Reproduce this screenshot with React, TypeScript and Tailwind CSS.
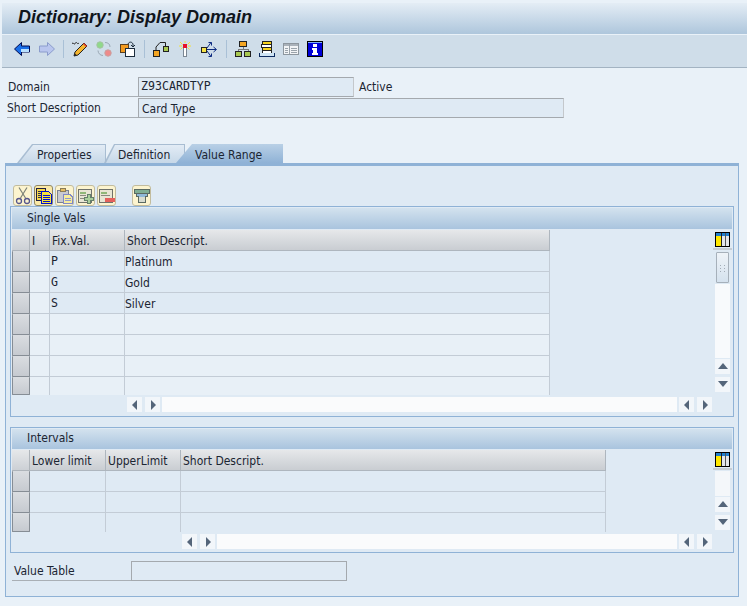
import React from 'react';

type IconProps = { children: React.ReactNode };

function Ico({ children }: IconProps) {
  return (
    <svg viewBox="0 0 16 16" className="h-4 w-4 shrink-0" shapeRendering="crispEdges">
      {children}
    </svg>
  );
}

const ArrowLeft = () => (
  <Ico>
    <polygon points="0.5,8 7.5,1.5 7.5,5 15.5,5 15.5,11 7.5,11 7.5,14.5" fill="#1a6fe8" stroke="#000a50" shapeRendering="auto" />
    <rect x="7" y="8" width="8" height="2.5" fill="#b8e0ff" />
  </Ico>
);

const ArrowRight = () => (
  <Ico>
    <polygon points="15.5,8 8.5,1.5 8.5,5 0.5,5 0.5,11 8.5,11 8.5,14.5" fill="#b9c6ee" stroke="#8b9ccc" shapeRendering="auto" />
  </Ico>
);

const Pencil = () => (
  <Ico>
    <path d="M0 3 C1 0 2 5 3.5 2 C4.5 0 5 4 7 2" fill="none" stroke="#222" strokeWidth="1" shapeRendering="auto" />
    <polygon points="2,15 3,11 12,2 15,5 6,14" fill="#f5b52e" stroke="#222" shapeRendering="auto" />
    <polygon points="11,3 14,6 15,5 12,2" fill="#e04030" shapeRendering="auto" />
    <polygon points="2,15 3,12.5 4.5,14" fill="#222" shapeRendering="auto" />
  </Ico>
);

const Circles = () => (
  <Ico>
    <circle cx="4" cy="4" r="3.2" fill="#8fd98a" stroke="#a4c4a0" shapeRendering="auto" />
    <circle cx="12" cy="12" r="3.2" fill="#ee8a8a" stroke="#c8a0a0" shapeRendering="auto" />
    <path d="M9 1.5 C12 1.5 14 3 14 6" fill="none" stroke="#9aa8b4" shapeRendering="auto" />
    <path d="M2 9.5 C2 12 4 14.5 7 14.5" fill="none" stroke="#9aa8b4" shapeRendering="auto" />
  </Ico>
);

const CopyObj = () => (
  <Ico>
    <rect x="0.5" y="3.5" width="8" height="8" fill="#f29a1f" stroke="#5a4020" />
    <rect x="5.5" y="7.5" width="9" height="8" fill="#fff" stroke="#1c2c3c" />
    <path d="M8 3 C9 0.5 12 0.5 13 3 L13 6" fill="none" stroke="#1c2c3c" shapeRendering="auto" />
    <path d="M11 4 L13 6 L15 4" fill="none" stroke="#1c2c3c" shapeRendering="auto" />
  </Ico>
);

const NodeLink = () => (
  <Ico>
    <rect x="0.5" y="9.5" width="6" height="6" fill="#f5a623" stroke="#222" />
    <rect x="10.5" y="5.5" width="5" height="5" fill="#a8c850" stroke="#222" />
    <path d="M3 9 L3 6 L7 1.5 L12.5 1.5 L12.5 5" fill="none" stroke="#222" shapeRendering="auto" />
  </Ico>
);

const Wand = () => (
  <Ico>
    <rect x="6.5" y="6.5" width="3" height="9" fill="#fff" stroke="#7c8894" />
    <rect x="6" y="3" width="4" height="4" fill="#e8102a" />
    <path d="M8 0V2M3 1L5.5 3.5M13 1L10.5 3.5M2 5H5M11 5H14M3.5 8.5L5.5 6.5M12.5 8.5L10.5 6.5" stroke="#f4e23c" fill="none" shapeRendering="auto" />
  </Ico>
);

const WhereUsed = () => (
  <Ico>
    <rect x="0.5" y="6" width="5" height="5" fill="#f6e34a" stroke="#222" />
    <path d="M6 8.5H15M12.5 6L15.5 8.5L12.5 11M6 7L10 1.5M7.5 1.5H10.5V4.5M6 10L10 15.5M7.5 15.5H10.5V12.5" fill="none" stroke="#0c2a80" shapeRendering="auto" />
  </Ico>
);

const Hierarchy = () => (
  <Ico>
    <rect x="4.5" y="0.5" width="7" height="5" fill="#f5a623" stroke="#222" />
    <path d="M8 6V8M3 10V8H13V10" fill="none" stroke="#7a7a7a" />
    <rect x="0.5" y="10.5" width="6" height="5" fill="#a8c850" stroke="#222" />
    <rect x="9.5" y="10.5" width="6" height="5" fill="#a8c850" stroke="#222" />
  </Ico>
);

const Stack = () => (
  <Ico>
    <rect x="3.5" y="0.5" width="9" height="3" fill="#f5d21f" stroke="#222" />
    <rect x="2.5" y="3.5" width="10" height="3" fill="#fff" stroke="#222" />
    <rect x="3.5" y="6.5" width="9" height="3" fill="#f5d21f" stroke="#222" />
    <rect x="3.5" y="9.5" width="9" height="3" fill="#fff" stroke="#222" />
    <path d="M0.5 12V15.5H15.5V12" fill="#cfe4f4" stroke="#0c2a60" />
  </Ico>
);

const ListGray = () => (
  <Ico>
    <rect x="0.5" y="2.5" width="15" height="11" fill="#f2f4f6" stroke="#8d969e" />
    <rect x="1" y="3" width="14" height="2" fill="#aab2ba" />
    <path d="M6.5 3V13M8 7H14M8 9H14M8 11H14M2 7H5M2 9H5M2 11H5" fill="none" stroke="#9aa3ab" />
  </Ico>
);

const Info = () => (
  <Ico>
    <rect x="0.5" y="0.5" width="15" height="15" fill="#0000d8" stroke="#000" />
    <rect x="1" y="1" width="14" height="1" fill="#7fb0f8" />
    <rect x="6" y="3" width="4" height="3" fill="#fff" />
    <path d="M5 7H10V12H11V14H5V12H6V9H5Z" fill="#fff" />
  </Ico>
);

const Scissors = () => (
  <svg viewBox="0 0 16 18" className="h-[18px] w-4">
    <path d="M4 0.5L10.5 11M12 0.5L5.5 11" stroke="#7c8278" strokeWidth="1.2" fill="none" />
    <circle cx="4" cy="14" r="2.5" fill="none" stroke="#55558c" strokeWidth="1.3" />
    <circle cx="12" cy="14" r="2.5" fill="none" stroke="#55558c" strokeWidth="1.3" />
  </svg>
);

const CopyDoc = () => (
  <svg viewBox="0 0 16 18" className="h-[18px] w-4" shapeRendering="crispEdges">
    <rect x="0.5" y="1.5" width="9" height="12" fill="#f6d84a" stroke="#202040" />
    <path d="M2 4.5H8M2 6.5H5M2 8.5H5M2 10.5H5" stroke="#303050" />
    <path d="M5.5 4.5H12.5L15.5 7.5V16.5H5.5Z" fill="#f8e23c" stroke="#0010d0" />
    <path d="M7 8.5H14M7 10.5H14M7 12.5H14M7 14.5H14" stroke="#0010d0" />
  </svg>
);

const PasteDoc = () => (
  <svg viewBox="0 0 16 18" className="h-[18px] w-4" shapeRendering="crispEdges">
    <rect x="0.5" y="3.5" width="11" height="12" fill="#c9cad0" stroke="#7b8190" />
    <rect x="3.5" y="1.5" width="5" height="3" fill="#e6be62" stroke="#8a7c58" />
    <path d="M6.5 7.5H13L15.5 10V16.5H6.5Z" fill="#f7ed9c" stroke="#8088c8" />
    <path d="M8 11.5H14M8 13.5H14" stroke="#8f98d0" />
  </svg>
);

const RowAdd = () => (
  <svg viewBox="0 0 16 18" className="h-[18px] w-4" shapeRendering="crispEdges">
    <rect x="0.5" y="2.5" width="13" height="13" fill="#e8e6d4" stroke="#6f726a" />
    <rect x="2" y="5" width="6" height="2" fill="#90b878" />
    <rect x="2" y="8" width="6" height="1" fill="#8a8a80" />
    <rect x="2" y="11" width="5" height="1" fill="#8a8a80" />
    <path d="M9.5 7.5H12.5V10.5H15.5V13.5H12.5V16.5H9.5V13.5H6.5V10.5H9.5Z" fill="#a9d09a" stroke="#64806a" />
  </svg>
);

const RowDel = () => (
  <svg viewBox="0 0 16 18" className="h-[18px] w-4" shapeRendering="crispEdges">
    <rect x="0.5" y="2.5" width="13" height="13" fill="#e8e6d4" stroke="#6f726a" />
    <rect x="2" y="5" width="6" height="2" fill="#90b878" />
    <rect x="2" y="8" width="9" height="1" fill="#8a8a80" />
    <rect x="6" y="11" width="10" height="4" fill="#e4615c" />
  </svg>
);

const Filter = () => (
  <svg viewBox="0 0 16 18" className="h-[18px] w-4" shapeRendering="crispEdges">
    <rect x="0.5" y="2.5" width="15" height="4" fill="#7fae94" stroke="#5a6a62" />
    <path d="M2.5 6.5H13.5V9.5H11.5V15.5H4.5V9.5H2.5Z" fill="#8fb8d8" stroke="#5a6a62" />
    <rect x="5" y="10" width="6" height="5" fill="#d8dcd0" />
  </svg>
);

const ConfigIcon = () => (
  <svg viewBox="0 0 15 15" className="h-[15px] w-[15px]" shapeRendering="crispEdges">
    <rect x="0.5" y="0.5" width="14" height="14" fill="#fff" stroke="#000" />
    <rect x="1" y="1" width="13" height="3" fill="#1f7fcf" />
    <rect x="1" y="4" width="5" height="10" fill="#ffe800" />
    <rect x="6" y="1" width="1" height="13" fill="#222" />
    <rect x="10" y="1" width="1" height="13" fill="#555" />
    <rect x="7" y="4" width="3" height="10" fill="#e4e6ea" />
    <rect x="11" y="4" width="3" height="10" fill="#e4e6ea" />
  </svg>
);

function ToolButton({ children, active }: { children: React.ReactNode; active?: boolean }) {
  return (
    <div
      className={
        active
          ? 'flex h-[21px] w-[19px] items-center justify-center rounded-[3px] border border-[#8f8868] bg-[#fbe9a6]'
          : 'flex h-[21px] w-[19px] items-center justify-center rounded-[3px] border border-[#c2bc9e] bg-[#fcf4cf]'
      }
    >
      {children}
    </div>
  );
}

function ScrollBtn({ dir }: { dir: 'up' | 'down' | 'left' | 'right' }) {
  const points = {
    up: '0,7 5,1 10,7',
    down: '0,1 5,7 10,1',
    left: '7,0 7,10 2,5',
    right: '3,0 3,10 8,5',
  }[dir];
  return (
    <div className="flex h-[15px] w-[15px] shrink-0 items-center justify-center bg-[#f2f6fa]">
      <svg viewBox="0 0 10 10" className="h-[10px] w-[10px]">
        <polygon points={points} fill="#54657a" />
      </svg>
    </div>
  );
}

function Cols({ widths, labels }: { widths: string[]; labels: string[] }) {
  return (
    <div className="flex h-[21px]">
      <div className="h-[21px] w-[18px] border-r border-b border-[#aeb4ba] bg-gradient-to-b from-[#e6e8ea] to-[#ccd0d5]" />
      {labels.map((label, i) => (
        <div
          key={label + i}
          className={`${widths[i]} flex h-[21px] items-center truncate border-r border-b border-[#aeb6be] bg-gradient-to-b from-[#e6e8ea] to-[#c9cdd2] pt-[1px] pl-[2px]`}
        >
          {label}
        </div>
      ))}
    </div>
  );
}

type Row = { cells: string[]; h: string; last?: boolean };

function GridRow({ widths, row, tinted }: { widths: string[]; row: Row; tinted?: boolean }) {
  return (
    <div className={`flex ${row.h}`}>
      <div className="h-full w-[18px] rounded-[1px] border-x border-b border-[#868d95] bg-gradient-to-b from-[#dadde1] to-[#c6cad0]" />
      {widths.map((w, i) => (
        <div
          key={i}
          className={`${w} flex h-full items-center border-r border-[#c3ccd6] pt-[1px] ${row.last ? '' : 'border-b'} ${
            tinted && !row.cells[i] ? 'bg-[#e8f0f7]' : 'bg-[#dfeaf4]'
          } ${i === widths.length - 2 && row.cells[i] ? "pl-[1px] font-['DejaVu_Sans_Mono',monospace] text-[11.6px]" : ''}`}
        >
          {row.cells[i]}
        </div>
      ))}
    </div>
  );
}

function HBar({ lead, track }: { lead: string; track: string }) {
  return (
    <div className={`mt-[2px] flex h-[15px] ${lead}`}>
      <ScrollBtn dir="left" />
      <div className="w-[3px]" />
      <ScrollBtn dir="right" />
      <div className={`ml-[2px] mr-[2px] h-[15px] ${track} bg-[#fafbfc]`} />
      <ScrollBtn dir="left" />
      <div className="w-[3px]" />
      <ScrollBtn dir="right" />
    </div>
  );
}

const single = {
  widths: ['w-[20px]', 'w-[75px]', 'w-[425px]'],
  labels: ['I', 'Fix.Val.', 'Short Descript.'],
  rows: [
    { cells: ['', 'P', 'Platinum'], h: 'h-[21px]' },
    { cells: ['', 'G', 'Gold'], h: 'h-[21px]' },
    { cells: ['', 'S', 'Silver'], h: 'h-[21px]' },
    { cells: ['', '', ''], h: 'h-[21px]' },
    { cells: ['', '', ''], h: 'h-[21px]' },
    { cells: ['', '', ''], h: 'h-[21px]' },
    { cells: ['', '', ''], h: 'h-[18px]', last: true },
  ] as Row[],
};

const intervals = {
  widths: ['w-[76px]', 'w-[75px]', 'w-[425px]'],
  labels: ['Lower limit', 'UpperLimit', 'Short Descript.'],
  rows: [
    { cells: ['', '', ''], h: 'h-[21px]' },
    { cells: ['', '', ''], h: 'h-[21px]' },
    { cells: ['', '', ''], h: 'h-[19px]', last: true },
  ] as Row[],
};

export default function App() {
  return (
    <div className="h-[606px] w-[747px] overflow-hidden bg-[#e9f1f8] pt-[3px] pl-[2px] font-['DejaVu_Sans_Condensed','DejaVu_Sans',sans-serif] text-[12px] leading-none text-[#1b2532]">
      {/* title + toolbar */}
      <div className="flex h-[31px] items-center bg-gradient-to-b from-[#e4edf5] to-[#aec6dc] pl-4 pb-[3px]">
        <h1 className="font-['Liberation_Sans',sans-serif] text-[18px] font-bold italic text-[#10151c]">
          Dictionary: Display Domain
        </h1>
      </div>
      <div className="flex h-[34px] items-center gap-2 border-y border-t-[#e9f1f8] border-b-[#a3b3c2] bg-[#cfdde9] pb-[4px] pl-3">
        <ArrowLeft />
        <div className="ml-px">
          <ArrowRight />
        </div>
        <div className="h-[18px] w-px bg-[#a9c0d6]" />
        <Pencil />
        <Circles />
        <CopyObj />
        <div className="h-[18px] w-px bg-[#a9c0d6]" />
        <NodeLink />
        <Wand />
        <WhereUsed />
        <div className="ml-px h-[18px] w-px bg-[#a9c0d6]" />
        <Hierarchy />
        <Stack />
        <ListGray />
        <Info />
      </div>

      {/* header fields */}
      <div className="-ml-[2px] pt-[9px] pl-[7px]">
        <div className="flex h-[20px] items-center">
          <div className="flex h-[20px] w-[131px] items-center border-b border-[#a9afb5] pl-[1px]">Domain</div>
          <div className="flex h-[20px] w-[216px] items-center border border-[#a4a9ae] border-r-[#c4c8cc] bg-[#dfeaf4] pl-[2px] font-['DejaVu_Sans_Mono',monospace] text-[11.6px]">
            Z93CARDTYP
          </div>
          <div className="pl-[5px]">Active</div>
        </div>
        <div className="mt-[1px] flex h-[20px] items-center">
          <div className="flex h-[20px] w-[131px] items-center border-b border-[#a9afb5] pt-[1px]">Short Description</div>
          <div className="flex h-[20px] w-[426px] items-center border border-[#a4a9ae] border-r-[#c4c8cc] bg-[#dfeaf4] pt-[1px] pl-[3px]">
            Card Type
          </div>
        </div>
      </div>

      {/* tabs */}
      <div className="-ml-[2px] mt-[26px] flex h-[19px] pl-[17px]">
        <div className="h-[19px] w-[89px] bg-[#a8bdd2] [clip-path:polygon(15px_0,100%_0,100%_100%,0_100%)]">
          <div className="flex h-[19px] items-center bg-gradient-to-b from-[#e4edf6] to-[#c7d8e8] pt-[2px] pl-[20px] [clip-path:polygon(16px_1px,calc(100%-1px)_1px,calc(100%-1px)_100%,2px_100%)]">
            Properties
          </div>
        </div>
        <div className="-ml-[2px] h-[19px] w-[81px] bg-[#a8bdd2] [clip-path:polygon(10px_0,100%_0,100%_100%,0_100%)]">
          <div className="flex h-[19px] items-center bg-gradient-to-b from-[#e4edf6] to-[#c7d8e8] pt-[2px] pl-[14px] [clip-path:polygon(11px_1px,calc(100%-1px)_1px,calc(100%-1px)_100%,2px_100%)]">
            Definition
          </div>
        </div>
        <div className="-ml-[9px] flex h-[19px] w-[107px] items-center bg-gradient-to-b from-[#b9d0e6] to-[#8fb2d6] pt-[2px] pl-[19px] [clip-path:polygon(16px_0,100%_0,100%_100%,0_100%)]">
          Value Range
        </div>
      </div>

      {/* tab panel */}
      <div className="ml-[3px] h-[434px] w-[734px] border border-t-[3px] border-[#8fb2d6] bg-[#dfeaf4] px-[4px]">
        <div className="flex pt-[19px] pl-[3px]">
          <div className="flex gap-[2px]">
            <ToolButton>
              <Scissors />
            </ToolButton>
            <ToolButton active>
              <CopyDoc />
            </ToolButton>
            <ToolButton>
              <PasteDoc />
            </ToolButton>
            <ToolButton>
              <RowAdd />
            </ToolButton>
            <ToolButton>
              <RowDel />
            </ToolButton>
          </div>
          <div className="ml-[16px]">
            <ToolButton>
              <Filter />
            </ToolButton>
          </div>
        </div>

        {/* single values */}
        <div className="h-[211px] w-[724px] border border-[#8fb2d6] p-px">
          <div className="flex h-[21px] items-center bg-gradient-to-b from-[#d3e2ee] to-[#a9c4de] pb-[2px] pl-[15px]">Single Vals</div>
          <div className="mt-px flex">
            <div className="w-[703px]">
              <Cols widths={single.widths} labels={single.labels} />
              {single.rows.map((row, i) => (
                <GridRow key={i} widths={single.widths} row={row} tinted />
              ))}
            </div>
            <div className="w-[15px]">
              <div className="-ml-[2px] flex h-[20px] w-[19px] items-start justify-center border-b-2 border-[#c6cdd4] pt-[2px]">
                <ConfigIcon />
              </div>
              <div className="mx-[1px] mt-[2px] flex h-[31px] items-center justify-center rounded-[1px] border border-[#a6b0ba] bg-gradient-to-b from-[#eef3f8] to-[#d5e2ee]">
                <svg viewBox="0 0 8 8" className="h-2 w-2">
                  <path d="M1 1h1v1H1zM5 1h1v1H5zM1 4h1v1H1zM5 4h1v1H5zM1 7h1v1H1zM5 7h1v1H5z" fill="#a2acb6" />
                </svg>
              </div>
              <div className="mt-[1px] h-[74px] bg-[#f8fafc]" />
              <div className="mt-[1px]">
                <ScrollBtn dir="up" />
              </div>
              <div className="mt-[3px]">
                <ScrollBtn dir="down" />
              </div>
            </div>
          </div>
          <HBar lead="pl-[115px]" track="w-[515px]" />
        </div>

        {/* intervals */}
        <div className="mt-[10px] h-[126px] w-[724px] border border-[#8fb2d6] p-px">
          <div className="flex h-[20px] items-center bg-gradient-to-b from-[#d3e2ee] to-[#a9c4de] pb-[2px] pl-[15px]">Intervals</div>
          <div className="mt-px flex">
            <div className="w-[703px]">
              <Cols widths={intervals.widths} labels={intervals.labels} />
              {intervals.rows.map((row, i) => (
                <GridRow key={i} widths={intervals.widths} row={row} />
              ))}
            </div>
            <div className="w-[15px]">
              <div className="-ml-[2px] flex h-[20px] w-[19px] items-start justify-center border-b-2 border-[#c6cdd4] pt-[2px]">
                <ConfigIcon />
              </div>
              <div className="mt-[1px] h-[25px] bg-[#f4f7fa]" />
              <div className="mt-[1px]">
                <ScrollBtn dir="up" />
              </div>
              <div className="mt-[3px]">
                <ScrollBtn dir="down" />
              </div>
            </div>
          </div>
          <HBar lead="pl-[170px]" track="w-[460px]" />
        </div>

        {/* value table */}
        <div className="mt-[8px] ml-[2px] flex h-[20px]">
          <div className="flex h-[20px] w-[119px] items-center border-b border-[#a9afb5] pl-[2px]">Value Table</div>
          <div className="h-[20px] w-[216px] border border-[#a4a9ae] bg-[#dfeaf4]" />
        </div>
      </div>
    </div>
  );
}
